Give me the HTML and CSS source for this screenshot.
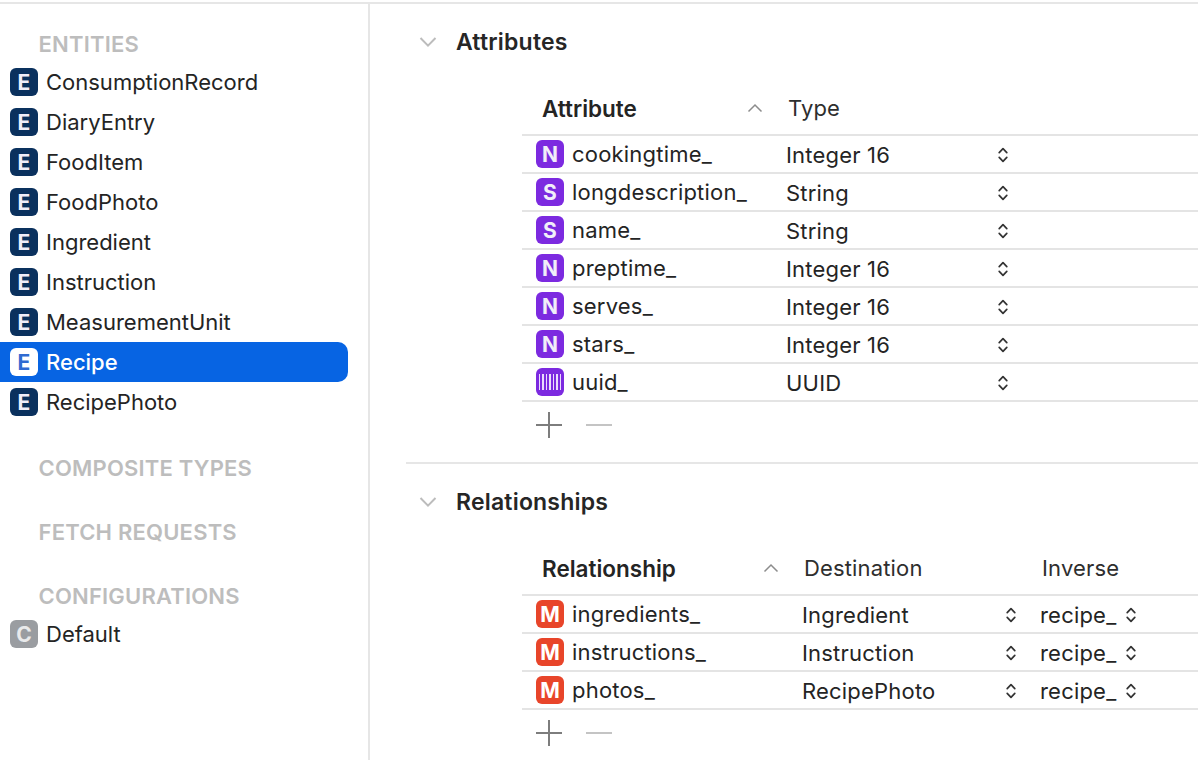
FILE: index.html
```html
<!DOCTYPE html>
<html lang="en">
<head>
<meta charset="utf-8">
<title>Recipe entity</title>
<link rel="stylesheet" href="styles.css">
</head>
<body>
<svg class="defs" width="0" height="0" aria-hidden="true">
  <symbol id="stepper" viewBox="0 0 12 18"><path d="M2.200 6.600 6 2.600l3.800 4M2.200 11.400 6 15.400l3.800-4" fill="none" stroke="currentColor" stroke-width="1.700" stroke-linecap="round" stroke-linejoin="round"/></symbol>
  <symbol id="down" viewBox="0 0 18 12"><path d="M1.500 2 9 9.600 16.500 2" fill="none" stroke="currentColor" stroke-width="2"/></symbol>
  <symbol id="up" viewBox="0 0 16 10"><path d="M1.500 8.500 8 2l6.500 6.500" fill="none" stroke="currentColor" stroke-width="1.500"/></symbol>
  <symbol id="plus" viewBox="0 0 28 28"><path d="M14 1v26M1 14h26" fill="none" stroke="currentColor" stroke-width="2"/></symbol>
  <symbol id="minus" viewBox="0 0 28 28"><path d="M1 14h26" fill="none" stroke="currentColor" stroke-width="2"/></symbol>
</svg>
<div class="app">
  <aside class="sidebar">
    <h2 class="group">ENTITIES</h2>
    <ul class="list">
      <li class="item"><span class="badge entity">E</span>ConsumptionRecord</li>
      <li class="item"><span class="badge entity">E</span>DiaryEntry</li>
      <li class="item"><span class="badge entity">E</span>FoodItem</li>
      <li class="item"><span class="badge entity">E</span>FoodPhoto</li>
      <li class="item"><span class="badge entity">E</span>Ingredient</li>
      <li class="item"><span class="badge entity">E</span>Instruction</li>
      <li class="item"><span class="badge entity">E</span>MeasurementUnit</li>
      <li class="item selected"><span class="badge entity">E</span>Recipe</li>
      <li class="item"><span class="badge entity">E</span>RecipePhoto</li>
    </ul>
    <h2 class="group spaced">COMPOSITE TYPES</h2>
    <h2 class="group spaced">FETCH REQUESTS</h2>
    <h2 class="group spaced">CONFIGURATIONS</h2>
    <ul class="list">
      <li class="item"><span class="badge config">C</span>Default</li>
    </ul>
  </aside>
  <main class="main">
    <section class="section attributes">
      <header class="section-head">
        <svg class="disclosure"><use href="#down"/></svg>
        <h1 class="section-title">Attributes</h1>
      </header>
      <div class="table">
        <div class="row head attr-grid">
          <div class="head-name">Attribute<svg class="sort"><use href="#up"/></svg></div>
          <div class="head-cell">Type</div>
        </div>
        <div class="row attr-grid"><div class="name"><span class="badge attr">N</span>cookingtime_</div><div>Integer 16</div><svg class="stepper"><use href="#stepper"/></svg></div>
        <div class="row attr-grid"><div class="name"><span class="badge attr">S</span>longdescription_</div><div>String</div><svg class="stepper"><use href="#stepper"/></svg></div>
        <div class="row attr-grid"><div class="name"><span class="badge attr">S</span>name_</div><div>String</div><svg class="stepper"><use href="#stepper"/></svg></div>
        <div class="row attr-grid"><div class="name"><span class="badge attr">N</span>preptime_</div><div>Integer 16</div><svg class="stepper"><use href="#stepper"/></svg></div>
        <div class="row attr-grid"><div class="name"><span class="badge attr">N</span>serves_</div><div>Integer 16</div><svg class="stepper"><use href="#stepper"/></svg></div>
        <div class="row attr-grid"><div class="name"><span class="badge attr">N</span>stars_</div><div>Integer 16</div><svg class="stepper"><use href="#stepper"/></svg></div>
        <div class="row attr-grid"><div class="name"><span class="badge attr bars"><i></i><i></i><i></i><i></i><i></i><i></i><i></i></span>uuid_</div><div>UUID</div><svg class="stepper"><use href="#stepper"/></svg></div>
        <div class="actions"><svg class="add"><use href="#plus"/></svg><svg class="remove"><use href="#minus"/></svg></div>
      </div>
    </section>
    <section class="section relationships">
      <header class="section-head">
        <svg class="disclosure"><use href="#down"/></svg>
        <h1 class="section-title">Relationships</h1>
      </header>
      <div class="table">
        <div class="row head rel-grid">
          <div class="head-name">Relationship<svg class="sort"><use href="#up"/></svg></div>
          <div class="head-cell">Destination</div>
          <div></div>
          <div class="head-cell">Inverse</div>
        </div>
        <div class="row rel-grid"><div class="name"><span class="badge rel">M</span>ingredients_</div><div>Ingredient</div><svg class="stepper"><use href="#stepper"/></svg><div class="inverse">recipe_<svg class="stepper"><use href="#stepper"/></svg></div></div>
        <div class="row rel-grid"><div class="name"><span class="badge rel">M</span>instructions_</div><div>Instruction</div><svg class="stepper"><use href="#stepper"/></svg><div class="inverse">recipe_<svg class="stepper"><use href="#stepper"/></svg></div></div>
        <div class="row rel-grid"><div class="name"><span class="badge rel">M</span>photos_</div><div>RecipePhoto</div><svg class="stepper"><use href="#stepper"/></svg><div class="inverse">recipe_<svg class="stepper"><use href="#stepper"/></svg></div></div>
        <div class="actions"><svg class="add"><use href="#plus"/></svg><svg class="remove"><use href="#minus"/></svg></div>
      </div>
    </section>
  </main>
</div>
</body>
</html>
```

FILE: styles.css
```css
* { box-sizing: border-box; }
html, body { margin: 0; height: 100%; }
body {
  background: #fff;
  color: #242424;
  font-family: Inter, "Liberation Sans", sans-serif;
  font-size: 22px;
  overflow: hidden;
}
.defs { position: absolute; }
.app {
  display: flex;
  height: 760px;
  margin-top: 2px;
  border-top: 2px solid #e6e6e6;
  overflow: hidden;
}
.sidebar {
  flex: 0 0 370px;
  border-right: 2px solid #e6e6e6;
  padding-top: 20px;
}
.group {
  margin: 0;
  height: 38px;
  padding-left: 38.500px;
  font-size: 22px;
  font-weight: 600;
  line-height: 40px;
  letter-spacing: .2px;
  color: #bdbdbd;
}
.group.spaced { margin-top: 26px; }
.list { list-style: none; margin: 0; padding: 0; }
.item {
  display: flex;
  align-items: center;
  gap: 8px;
  height: 40px;
  width: 348px;
  padding-left: 10px;
  border-radius: 0 10px 10px 0;
}
.item.selected {
  background: #0764e3;
  color: #fff;
  font-weight: 500;
}
.badge {
  flex: none;
  display: flex;
  align-items: center;
  justify-content: center;
  width: 28px;
  height: 28px;
  border-radius: 6px;
  color: #f1eef9;
  font-size: 21px;
  font-weight: 700;
  letter-spacing: 0;
}
.entity { background: #0a315e; }
.selected .entity { background: #fff; color: #2f6bd1; }
.config { background: #9a9da1; color: #e9eaeb; }
.attr { background: #7c2ae0; }
.rel { background: #e8452a; color: #fff; }
.bars { gap: 2px; }
.bars i { width: 1.500px; height: 16px; background: #eadcfb; }
.main { flex: 1; min-width: 0; padding-left: 36px; }
.section-head {
  display: flex;
  align-items: center;
  gap: 19px;
  height: 44px;
  padding-left: 13px;
}
.disclosure { width: 18px; height: 12px; color: #bcbcbc; }
.section-title { margin: 0; font-size: 23px; font-weight: 600; letter-spacing: .2px; color: #262626; }
.attributes { padding-top: 16px; height: 460px; border-bottom: 2px solid #e6e6e6; }
.relationships { padding-top: 16px; }
.table { margin: 23px 0 0 116px; }
.row {
  display: grid;
  align-items: center;
  height: 38px;
  padding-top: 2px;
  border-bottom: 2px solid #e4e4e4;
  letter-spacing: .2px;
}
.row.head { height: 49px; padding: 0 0 5px; letter-spacing: 0; }
.attr-grid { grid-template-columns: 264px 211px 12px 1fr; }
.rel-grid { grid-template-columns: 280px 203px 12px 1fr; }
.name {
  display: flex;
  align-items: center;
  gap: 8px;
  padding: 0 0 2px 14px;
}
.head-name {
  display: flex;
  align-items: center;
  justify-content: space-between;
  padding: 0 23px 0 20px;
  font-size: 22.500px;
  font-weight: 600;
}
.head-cell { padding-left: 2px; color: #2e2e2e; letter-spacing: .15px; }
.sort { width: 16px; height: 10px; color: #8c8c8c; }
.stepper { width: 12px; height: 18px; color: #333; }
.inverse {
  display: flex;
  align-items: center;
  gap: 8.500px;
  padding-left: 23px;
}
.rel-grid .head-cell:last-child { padding-left: 25px; }
.actions {
  display: flex;
  align-items: center;
  gap: 22px;
  height: 45px;
  padding-left: 13px;
}
.add { width: 28px; height: 28px; color: #7d7d7d; }
.remove { width: 28px; height: 28px; color: #c4c4c4; }
```
